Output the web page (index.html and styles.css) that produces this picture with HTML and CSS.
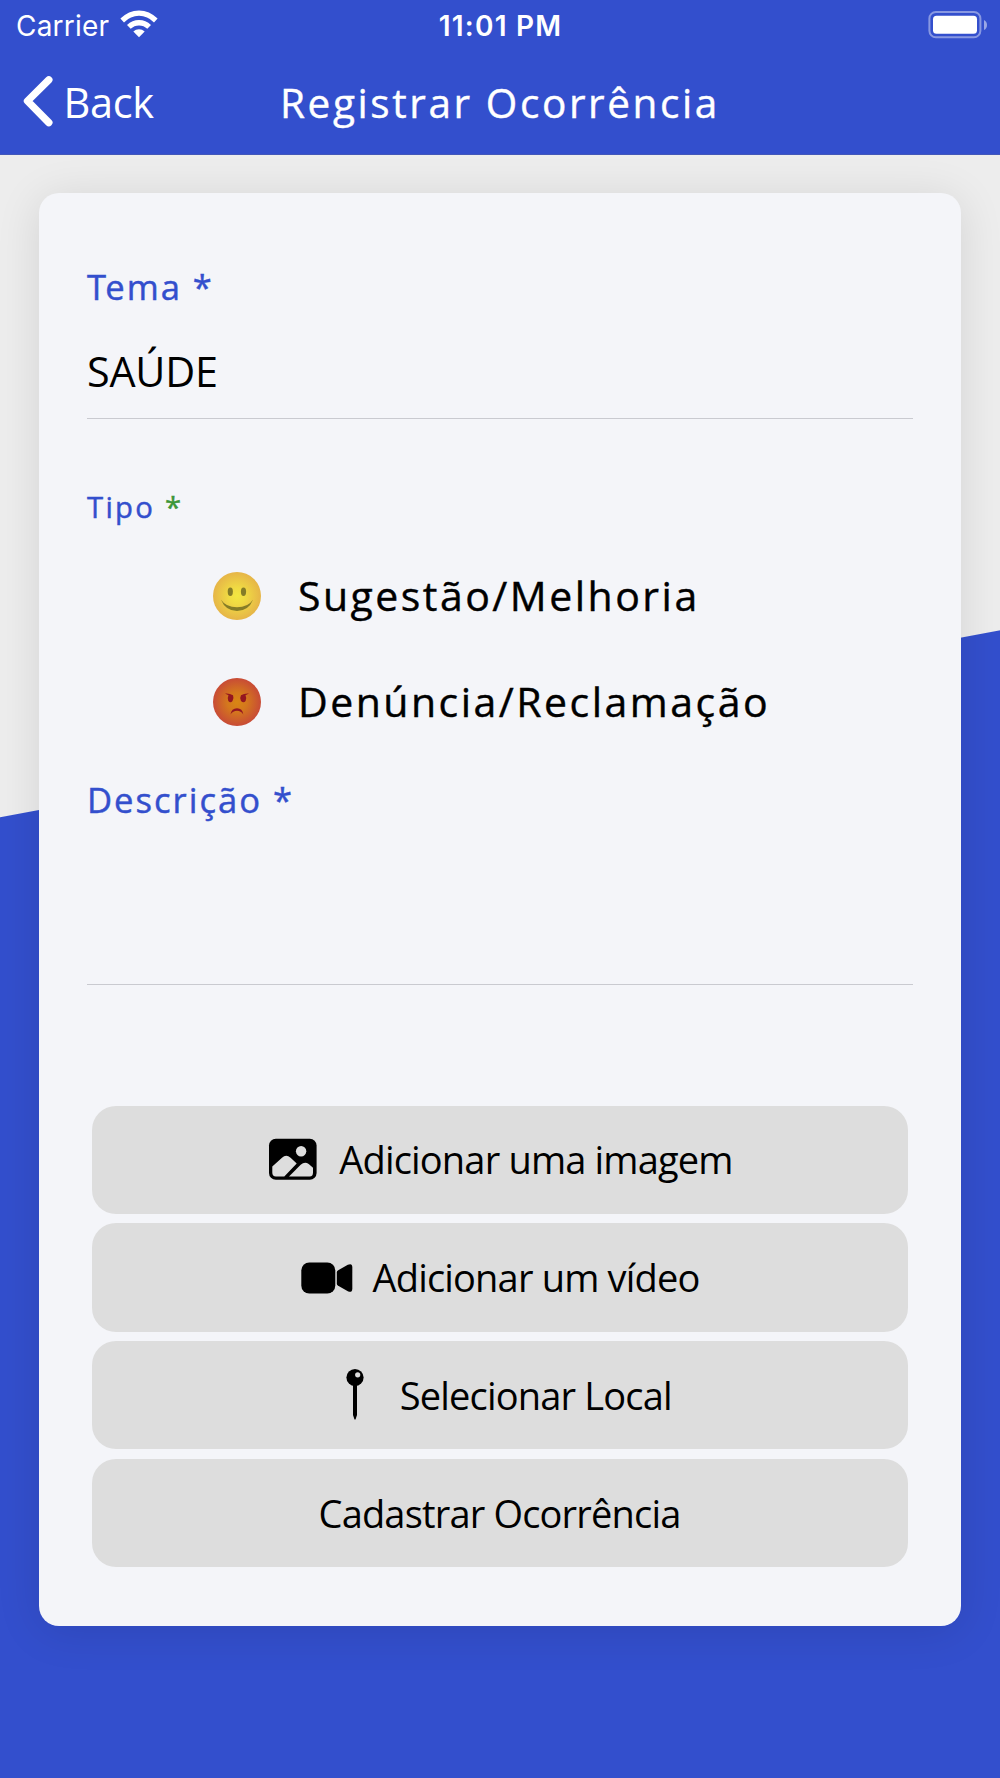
FILE: index.html
```
<!DOCTYPE html>
<html lang="pt-BR">
<head>
<meta charset="utf-8">
<title>Registrar Ocorrência</title>
<link rel="stylesheet" href="styles.css">
</head>
<body>
<div class="screen">
  <header class="header">
    <div class="status">
      <div class="status-left">
        <span>Carrier</span>
        <svg class="wifi" width="38" height="28" viewBox="0 0 38 28">
          <path d="M.4 8.600Q8.500.4 19 .4T37.600 8.600L34 12.400Q27.500 5.800 19 5.800T4 12.400Z"/>
          <path d="M7 15Q12.200 10 19 10T31 15L27.300 18.800Q23.800 15.400 19 15.400T10.700 18.800Z"/>
          <path d="M13.300 21.500Q15.800 19.200 19 19.200T24.700 21.500L19 27.300Z"/>
        </svg>
      </div>
      <span class="time">11:01 PM</span>
      <svg class="battery" width="60" height="28" viewBox="0 0 60 28">
        <rect x="1.400" y="1" width="51" height="25.300" rx="6.500" fill="none" stroke="#fff" stroke-opacity=".42" stroke-width="2"/>
        <rect x="5" y="4.800" width="44" height="18" rx="3.500" fill="#fff"/>
        <path d="M56 9q3 1.500 3 5t-3 5z" fill="#fff" fill-opacity=".5"/>
      </svg>
    </div>
    <nav class="navbar">
      <a class="back">
        <svg width="34" height="54" viewBox="0 0 34 54"><path d="M28.800 5.800 7.500 27 28.800 48.600" fill="none" stroke="#fff" stroke-width="7.400" stroke-linecap="round" stroke-linejoin="round"/></svg>
        <span>Back</span>
      </a>
      <h1 class="title">Registrar Ocorrência</h1>
    </nav>
  </header>
  <main class="content">
    <form class="card">
      <label class="label"><span class="kern">T</span>ema *</label>
      <div class="value">SAÚDE</div>
      <div class="label label-small">Tipo <span class="required">*</span></div>
      <div class="options">
        <div class="option">
          <svg width="48" height="48" viewBox="0 0 48 48">
            <defs><radialGradient id="happy"><stop offset="0" stop-color="#f3e741"/><stop offset=".35" stop-color="#f0da43"/><stop offset="1" stop-color="#e6b548"/></radialGradient></defs>
            <circle cx="24" cy="24" r="24" fill="url(#happy)"/>
            <g fill="#857c27"><ellipse cx="17.300" cy="19.800" rx="2.600" ry="4.200"/><ellipse cx="30.500" cy="19.800" rx="2.600" ry="4.200"/><path d="M8 27.800Q13 35.300 24 35.300T40 27.800Q35.500 39 24 39T8 27.800Z"/></g>
          </svg>
          <span>Sugestão/Melhoria</span>
        </div>
        <div class="option">
          <svg width="48" height="48" viewBox="0 0 48 48">
            <defs><radialGradient id="angry"><stop offset="0" stop-color="#d98613"/><stop offset=".4" stop-color="#d4781d"/><stop offset="1" stop-color="#c84b36"/></radialGradient></defs>
            <circle cx="24" cy="24" r="24" fill="url(#angry)"/>
            <g fill="#941620"><path d="M12 15.500Q16.500 15 20 17.200Q21.200 20 19.500 23Q17.500 25.700 15.300 23Q14 20 15.500 17.200Z"/><path d="M36 15.500Q31.500 15 28 17.200Q26.300 20 28 23Q30.500 25.700 32.600 23Q34 20 32.500 17.200Z"/><path d="M17.500 36.500Q18.500 30.300 24 30.300T30.300 36.500Q28 32.800 24 32.800T17.500 36.500Z"/></g>
          </svg>
          <span>Denúncia/Reclamação</span>
        </div>
      </div>
      <label class="label">Descrição *</label>
      <div class="textarea"></div>
      <div class="actions">
        <button class="button" type="button">
          <svg width="54" height="54" viewBox="0 0 54 54">
            <rect x="3" y="6.700" width="47.600" height="41" rx="6.800"/>
            <g fill="#ddd" transform="translate(-.4 0)"><circle cx="35.500" cy="19.200" r="5.200"/><path d="M6.700 34.500 16.400 25.700Q20.500 21.600 25 25.700L31.100 31.500 18.700 44.500H10.400Q6.700 44.300 6.700 40.800Z"/><path d="M23.400 44.500 35.100 32.800Q39.200 28.900 43.100 32L47.400 35.800V40.800Q47.400 44.500 44.100 44.500Z"/></g>
          </svg>
          <span>Adicionar uma imagem</span>
        </button>
        <button class="button" type="button">
          <svg width="54" height="54" viewBox="0 0 54 54"><g transform="translate(-.7 0)"><rect x="2" y="12.500" width="34" height="31" rx="8"/><path d="M38.500 20.500 48.500 14.800Q53 12.800 53 17.300V38.700Q53 43.200 48.500 41.200L38.500 35.500Q37.500 34.800 37.500 33.500V22.500Q37.500 21.200 38.500 20.500Z"/></g></svg>
          <span>Adicionar um vídeo</span>
        </button>
        <button class="button button-pin" type="button">
          <svg width="54" height="54" viewBox="0 0 54 54"><circle cx="27" cy="9.500" r="8.600"/><path d="M25 17h4V47L27.500 51.500h-1L25 47Z"/><circle cx="29.700" cy="6.800" r="2.600" fill="#ddd"/></svg>
          <span>Selecionar Local</span>
        </button>
        <button class="button" type="submit"><span>Cadastrar Ocorrência</span></button>
      </div>
    </form>
  </main>
</div>
</body>
</html>
```
FILE: styles.css
```
* { box-sizing: border-box; }
body { margin: 0; }
svg { display: block; flex: none; }

.screen {
  display: flex;
  flex-direction: column;
  width: 1000px;
  height: 1778px;
  overflow: hidden;
  font-family: "Open Sans", sans-serif;
  color: #000;
}

.header {
  height: 155px;
  background: #334fcd;
  border-bottom: 1px solid #4358b9;
  color: #fff;
}

.status {
  display: grid;
  grid-template-columns: 1fr auto 1fr;
  align-items: center;
  height: 51px;
  padding: 0 12px 0 16px;
  font: 400 28px/50px Inter, sans-serif;
}
.status-left { display: flex; align-items: center; gap: 11px; letter-spacing: .2px; }
.wifi { fill: #fff; margin-bottom: 4px; }
.time { font-weight: 600; letter-spacing: 1.200px; margin-right: 3px; }
.battery { justify-self: end; margin-bottom: 2px; }

.navbar {
  display: grid;
  grid-template-columns: 280px 1fr 280px;
  align-items: center;
  height: 103px;
  padding-bottom: 3px;
}
.back {
  display: flex;
  align-items: center;
  gap: 9.500px;
  padding-left: 20px;
  font-size: 41.500px;
  letter-spacing: -.350px;
}
.back span, .title { padding-top: 2px; }
.title {
  margin: 0;
  font-size: 40.500px;
  font-weight: 400;
  letter-spacing: 2.600px;
  white-space: nowrap;
  -webkit-text-stroke: .4px currentColor;
}

.content {
  flex: 1;
  padding: 38px 39px;
  background: linear-gradient(169.410deg, #ededed 0 650.500px, #334fcd 651.500px);
}

.card {
  display: flex;
  flex-direction: column;
  height: 1432.500px;
  padding: 70px 48px 0;
  border-radius: 20px;
  background: #f4f5f9;
  box-shadow: 0 5px 45px rgba(0, 0, 0, .11);
}

.label {
  font-size: 34.600px;
  line-height: 48px;
  letter-spacing: 2px;
  color: #334fcd;
  -webkit-text-stroke: .45px currentColor;
}
.kern { letter-spacing: -.800px; }
.label-small {
  margin-top: 68px;
  font-size: 29.300px;
  line-height: 40px;
  letter-spacing: 2.250px;
}
.required { color: #3c9638; }

.value {
  height: 108px;
  padding-top: 32px;
  border-bottom: 1px solid #c9cad0;
  font-size: 41.300px;
  line-height: 56px;
  letter-spacing: -.200px;
}

.options { margin: 16px 0 21px; }
.option {
  display: flex;
  align-items: center;
  gap: 37px;
  height: 106px;
  padding-left: 126px;
  font-size: 41px;
  letter-spacing: 2.480px;
  -webkit-text-stroke: .4px currentColor;
}
.option span { padding-bottom: 3px; }

.textarea { height: 161px; border-bottom: 1px solid #c9cad0; }

.actions {
  display: grid;
  gap: 9.700px;
  margin: 120.500px 5px 0;
}
.button {
  display: flex;
  align-items: center;
  justify-content: center;
  gap: 19px;
  height: 108.200px;
  padding: 0 1px 1px 0;
  border: 0;
  border-radius: 24px;
  background: #ddd;
  color: #000;
  font: 400 38px/52px "Open Sans", sans-serif;
  letter-spacing: -.820px;
}
.button-pin { gap: 17.500px; padding-right: 0; }
```
